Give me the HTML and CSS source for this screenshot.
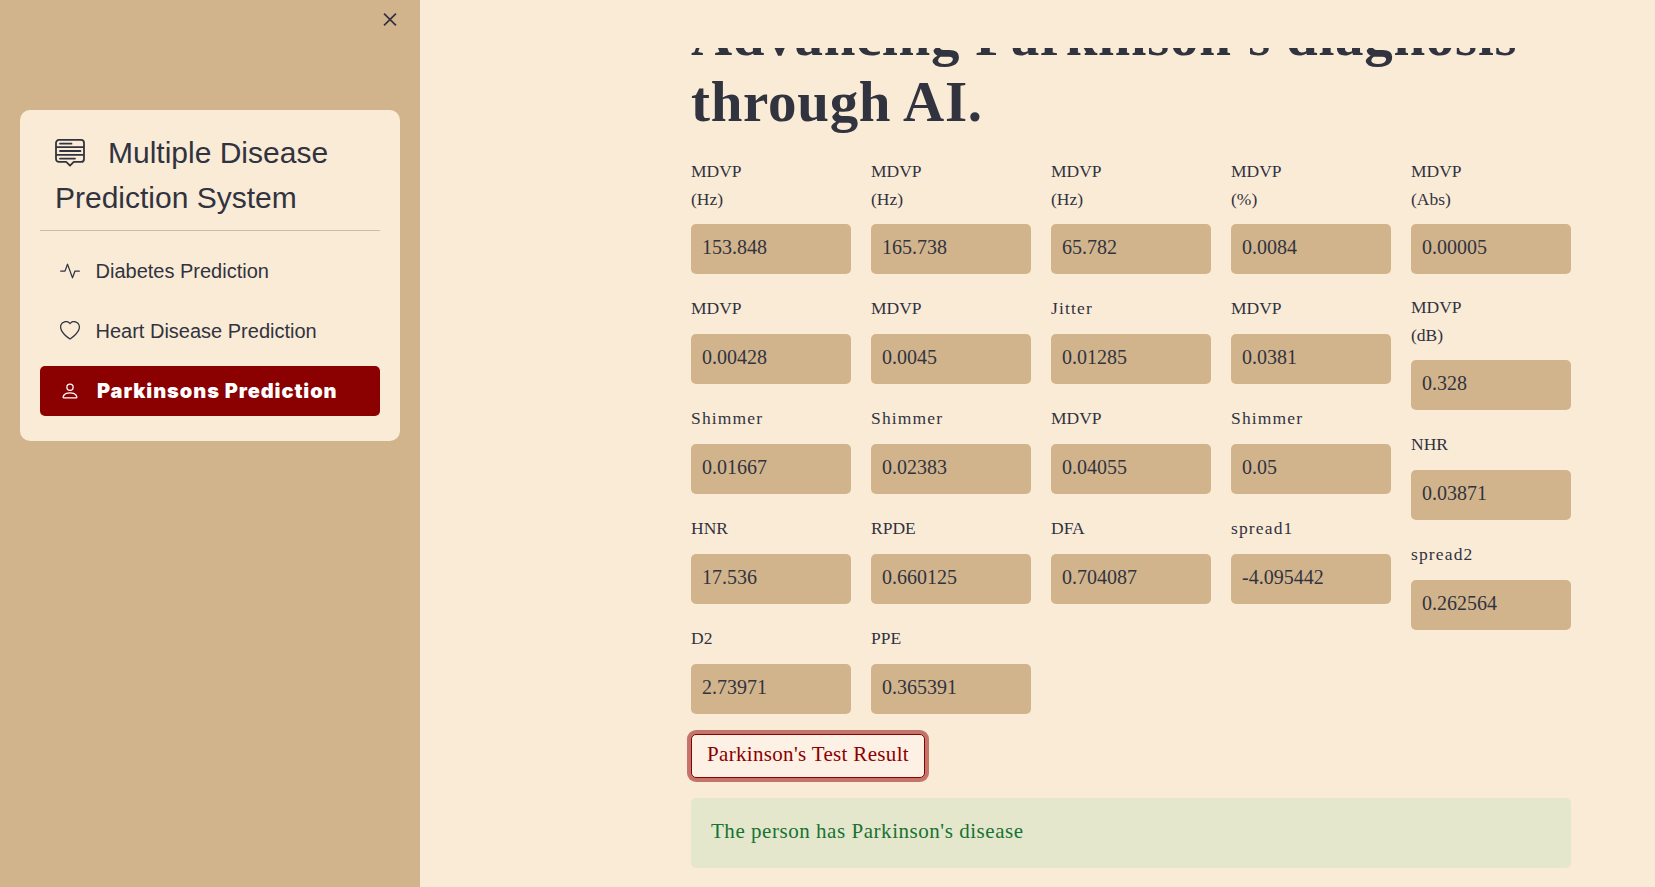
FILE: index.html
```html
<!DOCTYPE html>
<html lang="en">
<head>
<meta charset="utf-8">
<title>Multiple Disease Prediction System</title>
<link rel="stylesheet" href="styles.css">
</head>
<body>
<div class="app">
  <aside class="sidebar">
    <div class="sidebar-top">
      <svg class="close" viewBox="0 0 16 16"><path d="M1.2 1.2 14.8 14.8M14.8 1.2 1.2 14.8"/></svg>
    </div>
    <nav class="menu">
      <h4 class="menu-title"><svg class="menu-logo" viewBox="0 0 30 30"><path d="M4 1.9h22a3 3 0 0 1 3 3v16a3 3 0 0 1-3 3h-7.200L15 27.700 11.200 23.900H4a3 3 0 0 1-3-3v-16a3 3 0 0 1 3-3ZM1 9.200h28M1 16.800h28M5 5.700h11.500M5 13h20.500M5 20.600h15"/></svg><span class="menu-name">Multiple Disease Prediction System</span></h4>
      <ul class="menu-list">
        <li class="menu-item"><svg class="icon" viewBox="0 0 16 16"><path fill-rule="evenodd" d="M6 2a.5.5 0 0 1 .47.33L10 12.036l1.530-4.208A.5.5 0 0 1 12 7.500h3.500a.5.5 0 0 1 0 1h-3.150l-1.880 5.170a.5.5 0 0 1-.94 0L6 3.964 4.470 8.171A.5.5 0 0 1 4 8.500H.5a.5.5 0 0 1 0-1h3.150l1.880-5.170A.5.5 0 0 1 6 2Z"/></svg><span>Diabetes Prediction</span></li>
        <li class="menu-item"><svg class="icon" viewBox="0 0 16 16"><path d="m8 2.748-.717-.737C5.600.281 2.514.878 1.400 3.053c-.523 1.023-.641 2.500.314 4.385.920 1.815 2.834 3.989 6.286 6.357 3.452-2.368 5.365-4.542 6.286-6.357.955-1.886.838-3.362.314-4.385C13.486.878 10.400.280 8.717 2.010L8 2.748zM8 15C-7.333 4.868 3.279-3.040 7.824 1.143c.060.055.119.112.176.171a3.120 3.120 0 0 1 .176-.170C12.720-3.042 23.333 4.867 8 15z"/></svg><span>Heart Disease Prediction</span></li>
        <li class="menu-item active"><svg class="icon" viewBox="0 0 16 16"><path d="M8 8a3 3 0 1 0 0-6 3 3 0 0 0 0 6zm2-3a2 2 0 1 1-4 0 2 2 0 0 1 4 0zm4 8c0 1-1 1-1 1H3s-1 0-1-1 1-4 6-4 6 3 6 4zm-1-.004c-.001-.246-.154-.986-.832-1.664C11.516 10.680 10.289 10 8 10c-2.290 0-3.516.680-4.168 1.332-.678.678-.830 1.418-.832 1.664h10z"/></svg><span>Parkinsons Prediction</span></li>
      </ul>
    </nav>
  </aside>
  <main class="main">
    <header class="toolbar"></header>
    <div class="viewport">
      <div class="content">
        <h1 class="heading">Advancing Parkinson's diagnosis through AI.</h1>
        <div class="columns">
          <div class="column">
            <label class="field"><span class="label">MDVP<br>(Hz)</span><span class="input">153.848</span></label>
            <label class="field"><span class="label">MDVP</span><span class="input">0.00428</span></label>
            <label class="field"><span class="label wide">Shimmer</span><span class="input">0.01667</span></label>
            <label class="field"><span class="label">HNR</span><span class="input">17.536</span></label>
            <label class="field"><span class="label">D2</span><span class="input">2.73971</span></label>
          </div>
          <div class="column">
            <label class="field"><span class="label">MDVP<br>(Hz)</span><span class="input">165.738</span></label>
            <label class="field"><span class="label">MDVP</span><span class="input">0.0045</span></label>
            <label class="field"><span class="label wide">Shimmer</span><span class="input">0.02383</span></label>
            <label class="field"><span class="label">RPDE</span><span class="input">0.660125</span></label>
            <label class="field"><span class="label">PPE</span><span class="input">0.365391</span></label>
          </div>
          <div class="column">
            <label class="field"><span class="label">MDVP<br>(Hz)</span><span class="input">65.782</span></label>
            <label class="field"><span class="label wide">Jitter</span><span class="input">0.01285</span></label>
            <label class="field"><span class="label">MDVP</span><span class="input">0.04055</span></label>
            <label class="field"><span class="label">DFA</span><span class="input">0.704087</span></label>
          </div>
          <div class="column">
            <label class="field"><span class="label">MDVP<br>(%)</span><span class="input">0.0084</span></label>
            <label class="field"><span class="label">MDVP</span><span class="input">0.0381</span></label>
            <label class="field"><span class="label wide">Shimmer</span><span class="input">0.05</span></label>
            <label class="field"><span class="label wide">spread1</span><span class="input">-4.095442</span></label>
          </div>
          <div class="column">
            <label class="field"><span class="label">MDVP<br>(Abs)</span><span class="input">0.00005</span></label>
            <label class="field"><span class="label">MDVP<br>(dB)</span><span class="input">0.328</span></label>
            <label class="field"><span class="label">NHR</span><span class="input">0.03871</span></label>
            <label class="field"><span class="label wide">spread2</span><span class="input">0.262564</span></label>
          </div>
        </div>
        <button class="button">Parkinson's Test Result</button>
        <div class="alert">The person has Parkinson's disease</div>
      </div>
    </div>
  </main>
</div>
</body>
</html>
```

FILE: styles.css
```css
* { box-sizing: border-box; }
body {
  margin: 0;
  color: #31333f;
  background: #faebd7;
  font-family: "Source Serif Pro", "Liberation Serif", serif;
}
.app { display: flex; height: 887px; overflow: hidden; }

.sidebar {
  width: 420px;
  flex: none;
  padding: 0 20px;
  background: #d2b48c;
  font-family: "Liberation Sans", Arial, sans-serif;
}
.sidebar-top { display: flex; justify-content: flex-end; height: 110px; padding: 12px 3px 0 0; }
.close { width: 14px; height: 15px; fill: none; stroke: #31333f; stroke-width: 2; }
.menu { height: 331px; padding: 20px; border-radius: 10px; background: #faebd7; }
.menu-title {
  height: 101px;
  margin: 0;
  padding: 0 15px;
  border-bottom: 1px solid #cabcb0;
  font-size: 30px;
  font-weight: 400;
  line-height: 45px;
}
.menu-logo {
  width: 30px;
  height: 30px;
  margin-right: 23px;
  vertical-align: -5px;
  fill: none;
  stroke: currentColor;
  stroke-width: 1.8;
  stroke-linecap: round;
  stroke-linejoin: round;
}
.menu-list { display: grid; gap: 10px; margin: 15px 0 0; padding: 0; list-style: none; }
.menu-item {
  display: flex;
  align-items: center;
  gap: 15.5px;
  height: 50px;
  padding: 0 20px;
  border-radius: 5px;
  font-size: 20px;
}
.icon { width: 20px; height: 20px; flex: none; fill: currentColor; }
.active {
  gap: 17px;
  background: #8b0000;
  color: #fff;
  font-family: "Arial Black", Inter, sans-serif;
  font-weight: 900;
  letter-spacing: .92px;
}

.main { flex: 1; display: flex; flex-direction: column; }
.toolbar { height: 48px; flex: none; }
.viewport { flex: 1; overflow: hidden; }
.content { width: 880px; margin-left: 271px; }
.heading {
  margin: -45px 0 22px;
  font-size: 57px;
  font-weight: 700;
  line-height: 66px;
  letter-spacing: .7px;
}
.columns { display: flex; gap: 20px; }
.column { width: 160px; display: flex; flex-direction: column; gap: 20px; }
.field { display: flex; flex-direction: column; gap: 11px; }
.field + .field { margin-top: -1px; }
.label { display: flow-root; min-height: 30px; font-size: 17.5px; line-height: 28px; }
.label:not(:has(br)) { padding-top: 1px; }
.wide { letter-spacing: 1.15px; }
.input {
  height: 50px;
  padding: 0 11px;
  border-radius: 5px;
  background: #d2b48c;
  font-size: 20px;
  line-height: 46px;
}
.button {
  display: block;
  width: 234px;
  height: 44px;
  margin: 20px 0;
  padding: 0 0 3px;
  border: 1px solid #8b0000;
  border-radius: 5px;
  background: #fdf0e5;
  box-shadow: 0 0 0 4px rgba(139, 0, 0, .5);
  color: #8b0000;
  font-family: inherit;
  font-size: 21px;
  letter-spacing: .33px;
}
.alert {
  height: 70px;
  padding: 0 20px;
  border-radius: 5px;
  background: #e4e7cb;
  color: #177233;
  font-size: 21px;
  line-height: 66px;
  letter-spacing: .54px;
}
```
